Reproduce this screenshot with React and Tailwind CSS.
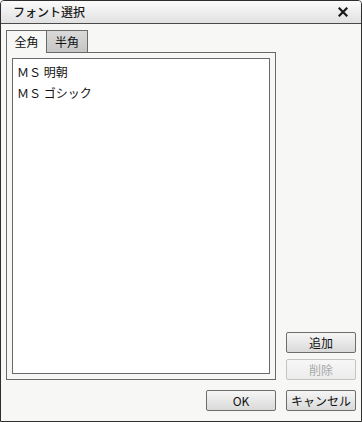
import React from "react";

const font = { fontFamily: '"Noto Sans CJK JP", "Noto Sans", sans-serif' };

function Btn({ children, disabled }) {
  return (
    <button
      className={
        disabled
          ? "w-[70px] h-[21px] rounded-[2px] border border-[#c4c4c4] bg-gradient-to-b from-[#f7f7f7] to-[#ececec] text-[12px] leading-none text-[#a8a8a8] flex items-center justify-center"
          : "w-[70px] h-[21px] rounded-[2px] border border-[#6e6e6e] bg-gradient-to-b from-[#f6f6f6] to-[#d9d9d9] text-[12px] leading-none text-[#111] flex items-center justify-center"
      }
    >
      {children}
    </button>
  );
}

export default function App() {
  return (
    <div
      className="w-[362px] h-[422px] border border-[#2e2e2e] rounded-t-[4px] bg-[#f7f8f6] flex flex-col overflow-hidden text-[#111]"
      style={font}
    >
      <div className="h-[23px] shrink-0 border-b border-[#4a4a4a] bg-gradient-to-b from-[#fbfbfb] to-[#e1e1e1] flex items-center justify-between pl-[12px] pr-[13px]">
        <span className="text-[12px] font-medium leading-none text-[#1a1a1a]">フォント選択</span>
        <svg width="10" height="10" viewBox="0 0 10 10">
          <path d="M1.5 1.5 L8.5 8.5 M8.5 1.5 L1.5 8.5" stroke="#1a1a1a" strokeWidth="2.2" strokeLinecap="square" />
        </svg>
      </div>
      <div className="flex-1 flex flex-col px-[5px] pt-[6px] pb-[10px]">
        <div className="flex-1 flex gap-[10px]">
          <div className="w-[270px] flex flex-col">
            <div className="flex h-[22px] shrink-0">
              <div className="w-[41px] h-[23px] relative z-10 border border-b-0 border-[#6a6a6a] bg-[#f7f8f6] flex items-center justify-center text-[12px] leading-none">
                全角
              </div>
              <div className="w-[41px] h-[22px] border border-l-0 border-b-0 border-[#6a6a6a] bg-gradient-to-b from-[#d9d9d9] to-[#c6c6c6] flex items-center justify-center text-[12px] leading-none">
                半角
              </div>
            </div>
            <div className="flex-1 border border-[#6a6a6a] p-[5px] flex">
              <div className="flex-1 border border-[#6a6a6a] bg-white pt-[2px] px-[4px] flex flex-col">
                <div className="h-[21px] flex items-center text-[12px] leading-none">ＭＳ 明朝</div>
                <div className="h-[21px] flex items-center text-[12px] leading-none">ＭＳ ゴシック</div>
              </div>
            </div>
          </div>
          <div className="w-[70px] flex flex-col justify-end gap-[6px]">
            <Btn>追加</Btn>
            <Btn disabled>削除</Btn>
          </div>
        </div>
        <div className="mt-[10px] flex justify-end gap-[10px]">
          <Btn>OK</Btn>
          <Btn>キャンセル</Btn>
        </div>
      </div>
    </div>
  );
}
